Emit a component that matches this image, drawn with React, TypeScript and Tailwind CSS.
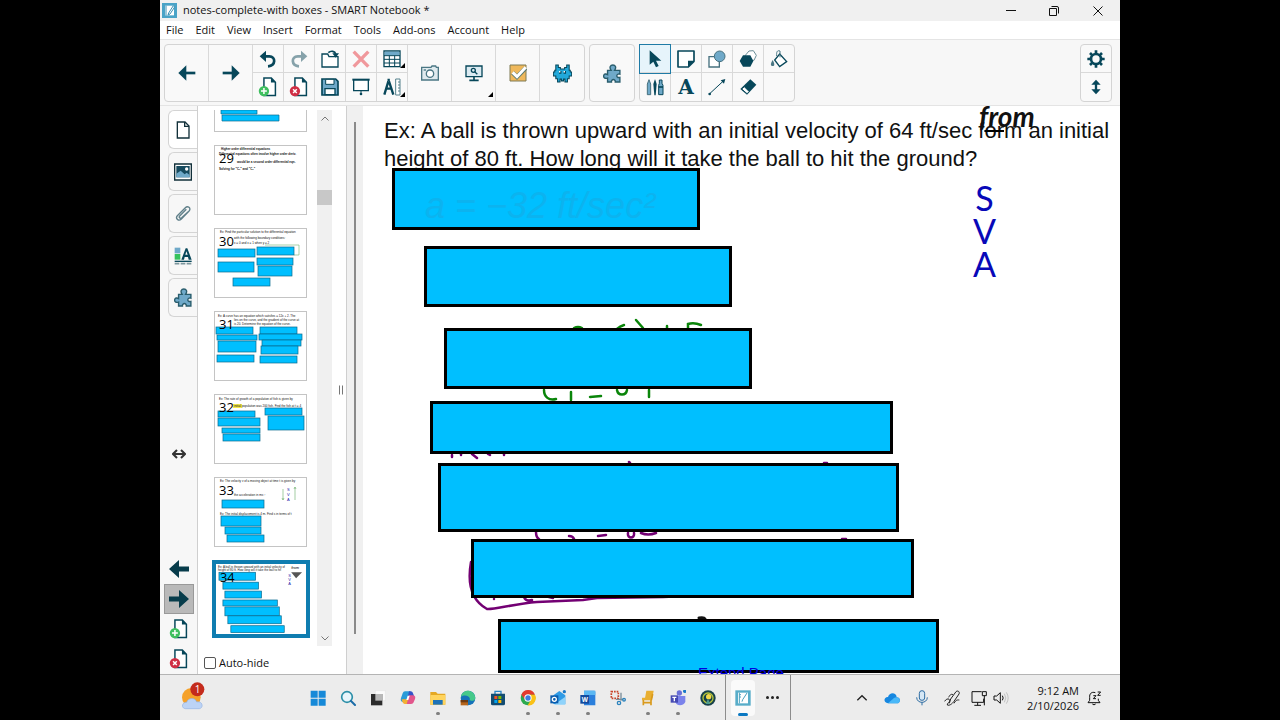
import React, { ReactNode } from 'react';
import clsx from 'clsx';

const INK = '#07475a';
const SKY = '#6fa9c9';

interface IconProps {
  children: ReactNode;
  size?: string;
}

// Every toolbar glyph is drawn on the same 54 unit grid
const Icon = ({ children, size = 'size-[18px]' }: IconProps) => (
  <svg viewBox="0 0 54 54" className={clsx(size, 'shrink-0')} fill="none" aria-hidden="true">
    {children}
  </svg>
);

const ArrowLeft = () => (
  <Icon>
    <path d="M1 27 25 4V50Z" fill={INK} />
    <path d="M20 27H52" stroke={INK} strokeWidth="8" />
  </Icon>
);

const ArrowRight = () => (
  <Icon>
    <path d="M53 27 29 4V50Z" fill={INK} />
    <path d="M2 27H34" stroke={INK} strokeWidth="8" />
  </Icon>
);

const Undo = () => (
  <Icon>
    <path d="M2 19 21 2V36Z" fill={INK} />
    <path d="M17 19H31C51 19 51 47 27 49" stroke={INK} strokeWidth="8" />
  </Icon>
);

const Redo = () => (
  <Icon>
    <path d="M52 19 33 2V36Z" fill="#86a2aa" />
    <path d="M37 19H23C3 19 3 47 27 49" stroke="#86a2aa" strokeWidth="8" />
  </Icon>
);

const OpenFile = () => (
  <Icon>
    <path d="M3 51V12H20L24 20H51V51Z" fill="#fff" stroke={INK} strokeWidth="4" />
    <path d="M22 8C30 1 42 3 44 12" stroke={INK} strokeWidth="5" />
    <path d="M34 10H54L44 23Z" fill={INK} />
  </Icon>
);

const Delete = () => (
  <Icon>
    <path d="M5 5 49 50M49 5 5 50" stroke="#f0989c" strokeWidth="10" />
  </Icon>
);

const Table = () => (
  <Icon>
    <path d="M3 3H51V50H3Z" fill="#fff" stroke={INK} strokeWidth="4" />
    <path d="M5 5H49V16H5Z" fill={SKY} />
    <path d="M3 17H51M3 28H51M3 39H51M19 17V50M35 17V50" stroke={INK} strokeWidth="3" />
  </Icon>
);

const Page = ({ kind }: { kind: 'add' | 'remove' }) => (
  <Icon size="size-[20px]">
    <path d="M16 3H36L47 14V50H16Z" fill="#fff" stroke={INK} strokeWidth="4" />
    <path d="M35 3V15H47Z" fill={INK} />
    <circle cx="16" cy="38" r="14" fill={kind === 'add' ? '#3fbf5f' : '#cf2f45'} />
    {kind === 'add' ? (
      <path d="M8 38H24M16 30V46" stroke="#fff" strokeWidth="4" />
    ) : (
      <path d="M11 33 21 43M21 33 11 43" stroke="#fff" strokeWidth="4" />
    )}
  </Icon>
);

const Save = () => (
  <Icon>
    <path d="M3 3H44L51 10V51H3Z" fill={SKY} stroke={INK} strokeWidth="5" />
    <path d="M14 4H39V19H14Z" fill="#fff" stroke={INK} strokeWidth="3" />
    <path d="M12 32H42V50H12Z" fill="#fff" stroke={INK} strokeWidth="4" />
  </Icon>
);

const Screen = () => (
  <Icon>
    <path d="M1 5H53" stroke={INK} strokeWidth="6" />
    <path d="M5 6H49V38H5Z" fill="#fff" stroke={INK} strokeWidth="4" />
    <path d="M27 38V46" stroke={INK} strokeWidth="3" />
    <circle cx="27" cy="48" r="4" fill={INK} />
  </Icon>
);

const Measure = () => (
  <Icon>
    <path d="M17 2V10M16 10 4 50M18 10 31 50M8 32H26" stroke={INK} strokeWidth="7" />
    <path d="M38 3H51V51H38Z" fill="#fff" stroke="#55808c" strokeWidth="3" />
    <path d="M45 12H51M45 21H51M45 30H51M45 39H51" stroke="#55808c" strokeWidth="3" />
  </Icon>
);

const Camera = () => (
  <Icon>
    <path d="M2 10H30L33 6H44L46 10H52V48H2Z" fill="#dfeaee" stroke="#4b7784" strokeWidth="4" />
    <circle cx="27" cy="29" r="11" fill="#fff" stroke="#4b7784" strokeWidth="4" />
    <path d="M8 18H15" stroke="#4b7784" strokeWidth="4" />
  </Icon>
);

const MonitorSearch = () => (
  <Icon>
    <path d="M3 6H51V38H3Z" fill="#dcebf2" stroke={INK} strokeWidth="4" />
    <circle cx="25" cy="19" r="6" stroke={INK} strokeWidth="4" />
    <path d="M29 23 37 31" stroke={INK} strokeWidth="4" />
    <path d="M27 38V48M13 49H41" stroke={INK} strokeWidth="5" />
  </Icon>
);

const Check = () => (
  <Icon>
    <path d="M3 3H51V51H3Z" fill="#efb85b" stroke="#7e7a55" strokeWidth="3" />
    <path d="M11 26 24 39 50 12" stroke="#5b7a70" strokeWidth="13" />
    <path d="M11 25 24 38 50 10" stroke="#fff" strokeWidth="9" />
  </Icon>
);

const Monster = () => (
  <Icon size="size-[19px]">
    <path
      d="M8 3H15V10H21V14H33V10H39V3H46V18H49V23H53V34H46V42H41V51H34V43H30V48H24V43H20V51H13V42H8V34H1V23H5V18H8Z"
      fill="#22a9da"
      stroke={INK}
      strokeWidth="3"
    />
    <path d="M17 20H24V28H17ZM30 20H37V28H30Z" fill={INK} />
    <path d="M17 20H21V24H17ZM30 20H34V24H30Z" fill="#fff" />
  </Icon>
);

const Puzzle = () => (
  <Icon size="size-[19px]">
    <path
      d="M13 18H23C17 9 21 3 28 3S39 9 33 18H48V29C38 25 35 41 48 38V51H35C36 42 23 42 24 51H13V40C5 43 1 38 2 33S8 27 13 30Z"
      fill={SKY}
      stroke="#2a5d6d"
      strokeWidth="4"
    />
  </Icon>
);

const Pointer = () => (
  <Icon>
    <path d="M11 1V44L22 35L30 52L38 48L30 32H46Z" fill={INK} />
  </Icon>
);

const Note = () => (
  <Icon>
    <path d="M3 3H51V34L34 51H3Z" fill="#fff" stroke={INK} strokeWidth="5" strokeLinejoin="round" />
    <path d="M51 32H33V51Z" fill={INK} />
  </Icon>
);

const Shapes = () => (
  <Icon>
    <path d="M3 20H34V51H3Z" fill="#fff" stroke="#47717f" strokeWidth="4" />
    <circle cx="35" cy="19" r="16" fill={SKY} stroke="#47717f" strokeWidth="3" />
  </Icon>
);

const Polygons = () => (
  <Icon>
    <path d="M30 3 43 2 52 16 45 31H26L19 16Z" fill="#fff" stroke="#6b8d97" strokeWidth="3" />
    <path d="M12 16H34L43 33 34 50H12L2 33Z" fill={INK} />
  </Icon>
);

const Fill = () => (
  <Icon>
    <path d="M29 12 50 35 29 50 14 30Z" fill="#fff" stroke={INK} strokeWidth="4" />
    <path d="M30 22V3C22 0 19 5 20 18" stroke="#4b7784" strokeWidth="3" />
    <path d="M8 30C0 42 2 48 8 48S15 42 8 30Z" fill="#4b7784" />
  </Icon>
);

const Pens = () => (
  <Icon>
    <path d="M4 18 9 5 14 18V50H4Z" fill={SKY} stroke="#47717f" strokeWidth="3" />
    <path d="M27 3 32 18 29 52H25L22 18Z" fill={INK} />
    <path d="M40 16V6H48V16L51 22V50H38V22Z" fill={SKY} stroke={INK} strokeWidth="3" />
    <path d="M38 27H51" stroke={INK} strokeWidth="5" />
  </Icon>
);

const LineTool = () => (
  <Icon>
    <path d="M4 48 46 9" stroke={INK} strokeWidth="3" />
    <path d="M52 3 48 17 38 7Z" fill={INK} />
    <circle cx="5" cy="48" r="4" fill={INK} />
  </Icon>
);

const Eraser = () => (
  <Icon>
    <path d="M34 4 52 20 24 50 4 33Z" fill={INK} />
    <path d="M16 26 31 41 24 47 8 33Z" fill="#fff" stroke={INK} strokeWidth="3" />
  </Icon>
);

const Gear = () => (
  <Icon>
    <circle cx="27" cy="27" r="15" stroke={INK} strokeWidth="8" />
    <path
      d="M27 1V11M27 43V53M1 27H11M43 27H53M9 9 16 16M38 38 45 45M45 9 38 16M9 45 16 38"
      stroke={INK}
      strokeWidth="8"
    />
  </Icon>
);

const UpDown = () => (
  <Icon>
    <path d="M27 5 41 20H13ZM27 49 13 34H41Z" fill={INK} />
    <path d="M27 14V40" stroke={INK} strokeWidth="7" />
  </Icon>
);

interface CellProps {
  label: string;
  children?: ReactNode;
  tall?: boolean;
  menu?: boolean;
  active?: boolean;
}

const Cell = ({ label, children, tall, menu, active }: CellProps) => (
  <button
    aria-label={label}
    className={clsx(
      'relative flex items-center justify-center',
      tall ? 'h-[56px] w-11' : 'h-[28px] w-[30px]',
      active && 'bg-[#e6f4fb] outline outline-[#1f7ba6]',
    )}
  >
    {children}
    {menu && (
      <svg viewBox="0 0 5 5" className="absolute right-0.5 bottom-1 size-[5px]" aria-hidden="true">
        <path d="M5 0V5H0Z" fill="#000" />
      </svg>
    )}
  </button>
);

const group = 'flex h-[58px] divide-x divide-[#d9d9d9] rounded-sm border border-[#d4d4d4] bg-[#f9f9f9]';
const pair = 'flex flex-col divide-y divide-[#d9d9d9]';

const Toolbar = () => (
  <div className="flex h-[67px] items-start gap-1 border-y border-[#e4e4e4] bg-[#f7f7f7] px-1 pt-1">
    <div className={group}>
      <Cell label="Previous page" tall><ArrowLeft /></Cell>
      <Cell label="Next page" tall><ArrowRight /></Cell>
      <div className={pair}>
        <Cell label="Undo"><Undo /></Cell>
        <Cell label="Add page"><Page kind="add" /></Cell>
      </div>
      <div className={pair}>
        <Cell label="Redo"><Redo /></Cell>
        <Cell label="Delete page"><Page kind="remove" /></Cell>
      </div>
      <div className={pair}>
        <Cell label="Open file"><OpenFile /></Cell>
        <Cell label="Save"><Save /></Cell>
      </div>
      <div className={pair}>
        <Cell label="Delete"><Delete /></Cell>
        <Cell label="Screen shade"><Screen /></Cell>
      </div>
      <div className={pair}>
        <Cell label="Table" menu><Table /></Cell>
        <Cell label="Measurement tools" menu><Measure /></Cell>
      </div>
      <Cell label="Screen capture" tall><Camera /></Cell>
      <Cell label="View screens" tall menu><MonitorSearch /></Cell>
      <Cell label="Response" tall><Check /></Cell>
      <Cell label="Game" tall><Monster /></Cell>
    </div>
    <div className={group}>
      <Cell label="Add-ons" tall><Puzzle /></Cell>
    </div>
    <div className={group}>
      <div className={pair}>
        <Cell label="Select" active><Pointer /></Cell>
        <Cell label="Pens"><Pens /></Cell>
      </div>
      <div className={pair}>
        <Cell label="Sticky note"><Note /></Cell>
        <Cell label="Text">
          <span className="font-['DejaVu_Serif',serif] text-xl leading-5 font-bold text-[#07475a]">A</span>
        </Cell>
      </div>
      <div className={pair}>
        <Cell label="Shapes"><Shapes /></Cell>
        <Cell label="Lines"><LineTool /></Cell>
      </div>
      <div className={pair}>
        <Cell label="Regular polygons"><Polygons /></Cell>
        <Cell label="Eraser"><Eraser /></Cell>
      </div>
      <div className={pair}>
        <Cell label="Fill"><Fill /></Cell>
        <Cell label="Empty" />
      </div>
    </div>
    <div className={clsx(group, 'mr-1 ml-auto')}>
      <div className={pair}>
        <Cell label="Settings"><Gear /></Cell>
        <Cell label="Move toolbar"><UpDown /></Cell>
      </div>
    </div>
  </div>
);

const TitleBar = () => (
  <header className="flex h-[21px] items-center bg-[#f0f0f0] pl-0.5">
    <svg viewBox="0 0 45 45" className="size-[15px]" aria-hidden="true">
      <path d="M0 0H45V45H0Z" fill="#4aa3c7" />
      <path d="M9 8H36V37H9Z" fill="#fff" />
      <path d="M34 8 20 30 18 36 24 33 38 12ZM12 8V37" stroke="#3b8fb3" strokeWidth="3" fill="#fff" />
    </svg>
    <h1 className="ml-[6px] text-[11px]">notes-complete-with boxes - SMART Notebook *</h1>
    <div className="ml-auto flex">
      <button aria-label="Minimize" className="flex h-5 w-[43px] items-center justify-center">
        <svg viewBox="0 0 10 10" className="size-[10px]"><path d="M0 4.5H10" stroke="#111" /></svg>
      </button>
      <button aria-label="Restore" className="flex h-5 w-[43px] items-center justify-center">
        <svg viewBox="0 0 10 10" className="size-[10px]" fill="none" stroke="#111">
          <path d="M.5 2.5H7.5V9.5H.5ZM2.5 .5H8Q9.5 .5 9.5 2V7.5" />
        </svg>
      </button>
      <button aria-label="Close" className="flex h-5 w-[45px] items-center justify-center">
        <svg viewBox="0 0 10 10" className="size-[10px]"><path d="M.5 .5 9.5 9.5M9.5 .5 .5 9.5" stroke="#111" /></svg>
      </button>
    </div>
  </header>
);

const menus = ['File', 'Edit', 'View', 'Insert', 'Format', 'Tools', 'Add-ons', 'Account', 'Help'];

const MenuBar = () => (
  <nav className="flex h-[18px] items-center gap-3 bg-white pl-1.5 text-[11px]">
    {menus.map((m) => (
      <button key={m}>{m}</button>
    ))}
  </nav>
);

const railTab = 'flex h-[39px] items-center justify-center rounded-l-md border border-r-0 border-[#d4d4d4]';
const railButton = 'flex h-[30px] w-[30px] items-center justify-center';

const Rail = () => (
  <div className="flex w-[37px] shrink-0 flex-col bg-[#f7f7f7] pt-1">
    <div className="flex flex-col gap-[3px] pl-2">
      <button aria-label="Page sorter" className={clsx(railTab, 'bg-white')}>
        <Icon>
          <path d="M10 3H33L45 15V51H10Z" fill="#fff" stroke="#12303a" strokeWidth="4" />
          <path d="M32 3V16H45" stroke="#12303a" strokeWidth="4" />
        </Icon>
      </button>
      <button aria-label="Gallery" className={railTab}>
        <Icon>
          <path d="M2 3H52V51H2Z" fill="#fff" stroke="#12303a" strokeWidth="4" />
          <path d="M7 9H47V43H7Z" fill="#164a5e" />
          <path d="M7 32 20 23 32 34 38 29 47 36V43H7Z" fill={SKY} />
          <circle cx="38" cy="18" r="5" fill="#fff" />
        </Icon>
      </button>
      <button aria-label="Attachments" className={railTab}>
        <Icon>
          <path
            d="M46 17 22 42C14 50 3 41 10 32L34 8C41 1 52 9 46 17L23 38C18 42 13 37 17 33L37 13"
            stroke="#5f7f89"
            strokeWidth="4"
          />
        </Icon>
      </button>
      <button aria-label="Properties" className={railTab}>
        <Icon>
          <path d="M2 2H19V19H2Z" fill={SKY} />
          <path d="M2 21H19V38H2Z" fill="#35c25c" />
          <path d="M22 38 35 4H40L53 38H44L42 30H32L30 38ZM34 23H41L37 13Z" fill={INK} fillRule="evenodd" />
          <path d="M2 43H53" stroke={INK} strokeWidth="4" />
          <path d="M2 50H53" stroke="#7c969d" strokeWidth="5" strokeDasharray="14 4" />
        </Icon>
      </button>
      <button aria-label="Extensions" className={railTab}><Puzzle /></button>
    </div>
    <button aria-label="Move panel" className="mt-auto flex h-7 items-center justify-center">
      <svg viewBox="0 0 14 10" className="h-[10px] w-[14px]" fill="none" stroke="#333" strokeWidth="2" aria-hidden="true">
        <path d="M5 1 1 5 5 9M9 1 13 5 9 9M1 5H13" />
      </svg>
    </button>
    <div className="mt-[86px] flex flex-col items-center">
      <button aria-label="Previous" className={railButton}>
        <svg viewBox="0 0 20 18" className="h-[18px] w-5"><path d="M0 9 10 0V6.5H20V11.5H10V18Z" fill="#073c4b" /></svg>
      </button>
      <button aria-label="Next" className={clsx(railButton, 'border border-[#999] bg-[#b9b9b9]')}>
        <svg viewBox="0 0 20 18" className="h-[18px] w-5"><path d="M20 9 10 0V6.5H0V11.5H10V18Z" fill="#073c4b" /></svg>
      </button>
      <button aria-label="Insert page" className={railButton}><Page kind="add" /></button>
      <button aria-label="Remove page" className={railButton}><Page kind="remove" /></button>
    </div>
  </div>
);

interface Thumb {
  no?: number;
  lines: [number, number, string][];
  boxes: [number, number, number, number][];
  bold?: boolean;
  extra?: ReactNode;
}

const thumbs: Thumb[] = [
  {
    no: 29,
    bold: true,
    lines: [
      [6, 4, 'Higher order differential equations'],
      [4, 9, 'Differential equations often involve higher order deriv.'],
      [22, 17, 'would be a second order differential eqn.'],
      [4, 24, 'Solving for "C₁" and "C₂"'],
    ],
    boxes: [],
  },
  {
    no: 30,
    lines: [
      [5, 4, 'Ex: Find the particular solution to the differential equation'],
      [19, 10, 'with the following boundary conditions:'],
      [19, 15, 'x = 0 and x = 1 when y = 2'],
    ],
    boxes: [[3, 20, 37, 8], [42, 18, 37, 8], [42, 29, 36, 7], [3, 33, 36, 10], [43, 37, 34, 10], [18, 49, 37, 8]],
    extra: <path d="M50 16H84V26H79" fill="none" stroke="#6fb36f" strokeWidth=".6" />,
  },
  {
    no: 31,
    lines: [
      [3, 5, 'Ex: A curve has an equation which satisfies = 12x + 2. The'],
      [19, 9, 'lies on the curve, and the gradient of the curve at'],
      [19, 13, 'is 20. Determine the equation of the curve.'],
    ],
    boxes: [
      [1, 15, 37, 7], [2, 23, 40, 5], [3, 29, 38, 11], [2, 43, 37, 7],
      [45, 15, 37, 7], [44, 22, 43, 6], [47, 28, 39, 6], [46, 34, 37, 8], [45, 44, 37, 7],
    ],
  },
  {
    no: 32,
    lines: [
      [4, 5, 'Ex: The rate of growth of a population of fish is given by'],
      [19, 12, 'initial population was 200 fish. Find the fish at t = 4'],
    ],
    boxes: [[3, 16, 37, 6], [3, 23, 42, 8], [7, 33, 38, 5], [8, 39, 37, 7], [50, 13, 37, 7], [53, 21, 36, 14]],
    extra: <path d="M18 9H27V13H18Z" fill="#f4e94b" />,
  },
  {
    no: 33,
    lines: [
      [5, 4, 'Ex: The velocity v of a moving object at time t is given by'],
      [19, 18, 'the acceleration in ms⁻²'],
      [5, 37, 'Ex: The initial displacement is 4 m. Find s in terms of t'],
    ],
    boxes: [[7, 22, 42, 8], [6, 38, 40, 10], [10, 49, 36, 7], [12, 57, 37, 7]],
    extra: (
      <>
        <path d="M68 11V22M80 22V9M79 11 80 9 81 11M67 20 68 22 69 20" fill="none" stroke="#7db87d" strokeWidth=".7" />
        <text x="72" y="13" fontSize="4" fill="#2222aa">S</text>
        <text x="72" y="18" fontSize="4" fill="#2222aa">V</text>
        <text x="72" y="23" fontSize="4" fill="#2222aa">A</text>
      </>
    ),
  },
];

const current: Thumb = {
  no: 34,
  lines: [
    [2, 3, 'Ex: A ball is thrown upward with an initial velocity of'],
    [2, 6, 'height of 80 ft. How long will it take the ball to hit'],
  ],
  boxes: [[3, 7, 37, 8], [7, 17, 36, 7], [9, 26, 37, 7], [7, 35, 55, 6], [9, 42, 55, 9], [12, 51, 54, 8], [15, 61, 54, 7]],
  extra: (
    <>
      <path d="M76 7H87L81 13Z" fill="#555" />
      <text x="76" y="4" fontSize="4" fontStyle="italic">from</text>
      <text x="73" y="12" fontSize="4" fill="#2222aa">S</text>
      <text x="73" y="16" fontSize="4" fill="#2222aa">V</text>
      <text x="73" y="20" fontSize="4" fill="#2222aa">A</text>
    </>
  ),
};

const ThumbArt = ({ thumb }: { thumb: Thumb }) => (
  <svg viewBox="0 0 91 68" className="block h-full w-full font-['Liberation_Sans',sans-serif]">
    {thumb.extra}
    {thumb.lines.map(([x, y, text]) => (
      <text key={text} x={x} y={y} fontSize="3" fontWeight={thumb.bold ? 'bold' : 'normal'} fill="#111">{text}</text>
    ))}
    {thumb.boxes.map(([x, y, w, h]) => (
      <rect key={`${x}-${y}`} x={x} y={y} width={w} height={h} fill="#00bfff" stroke="#0b6a8e" strokeWidth=".7" />
    ))}
    <text x="4" y="17" fontSize="13" className="font-['Open_Sans',sans-serif]">{thumb.no}</text>
  </svg>
);

const ClippedThumb = () => (
  <svg viewBox="0 0 91 21" className="block h-full w-full">
    <path d="M6 0H42V4H6ZM7 5H64V11H7Z" fill="#00bfff" stroke="#0b6a8e" strokeWidth=".7" />
  </svg>
);

const Sorter = () => (
  <div className="flex w-[150px] shrink-0 flex-col border-x border-[#cfcfcf] bg-white pt-1">
    <div className="flex">
      <div className="flex flex-1 flex-col items-center gap-[13px] pb-2 pl-3">
        <button aria-label="Page 28" className="h-[22px] w-[93px] border border-t-0 border-[#c4c4c4]">
          <ClippedThumb />
        </button>
        {thumbs.map((t) => (
          <button key={t.no} aria-label={`Page ${t.no}`} className="h-[70px] w-[93px] border border-[#c4c4c4]">
            <ThumbArt thumb={t} />
          </button>
        ))}
        <button aria-label="Page 34" aria-current="page" className="h-[78px] w-[98px] border-4 border-[#0f7db0]">
          <ThumbArt thumb={current} />
        </button>
      </div>
      <div className="mr-3.5 ml-1.5 flex w-[15px] flex-col items-center bg-[#f0f0f0]">
        <button aria-label="Scroll up" className="flex h-4 items-center">
          <svg viewBox="0 0 8 5" className="h-[5px] w-2"><path d="M.5 4.5 4 1 7.5 4.5" fill="none" stroke="#777" /></svg>
        </button>
        <div className="mt-16 h-[15px] w-full bg-[#c8c8c8]" />
        <button aria-label="Scroll down" className="mt-auto flex h-4 items-center">
          <svg viewBox="0 0 8 5" className="h-[5px] w-2"><path d="M.5 .5 4 4 7.5 .5" fill="none" stroke="#777" /></svg>
        </button>
      </div>
    </div>
    <label className="flex flex-1 items-center gap-[3px] pt-1.5 pl-1.5 text-[11px] leading-4">
      <input type="checkbox" className="size-3 appearance-none rounded-xs border border-[#555] bg-white" />
      Auto-hide
    </label>
  </div>
);

// Cover boxes keep the positions they were dragged to on the page
const covers = [
  'left-[29px] top-[62px] w-[308px] h-[62px]',
  'left-[61px] top-[140px] w-[308px] h-[61px]',
  'left-[81px] top-[222px] w-[308px] h-[61px]',
  'left-[67px] top-[295px] w-[463px] h-[53px]',
  'left-[75px] top-[357px] w-[461px] h-[69px]',
  'left-[108px] top-[433px] w-[443px] h-[59px]',
  'left-[135px] top-[513px] w-[441px] h-[54px]',
];

const Slide = () => (
  <main className="relative flex-1 overflow-hidden bg-white pt-[11px] pl-[21px] font-['Liberation_Sans',Arial,sans-serif]">
    <p className="text-[22px] leading-7 whitespace-nowrap">
      Ex: A ball is thrown upward with an initial velocity of 64 ft/sec f<s className="decoration-black decoration-2">or</s>m an initial
      <br />
      height of 80 ft. How long will it take the ball to hit the ground?
    </p>
    <svg viewBox="0 0 757 568" className="absolute top-0 left-0 h-[568px] w-[757px]" fill="none" strokeLinecap="round" strokeWidth="3" aria-hidden="true">
      <g stroke="#0a850a" strokeWidth="2.5">
        <path d="M211 222Q215 220 219 222M254 223Q257 220 261 219M273 214 280 222M304 220V223M325 223V218Q331 216 338 219" />
        <path d="M181 284C181 291 186 295 193 293M208 286V294M227 291 238 290M254 284C255 290 263 290 264 284M286 284V291" />
      </g>
      <g stroke="#730073" strokeWidth="2.5">
        <path d="M89 349V351M98 348V349M109 348 114 352M125 348 127 349M141 348V349M266 356 267 357M461 357 464 357" />
        <path d="M173 426C173 430 174 432 176 433M206 430Q210 430 211 433M235 430 243 429M265 427C264 433 272 433 271 427M278 427Q285 430 293 427M479 433H483" />
        <path d="M108 456C105 473 106 493 124 503C130 504 150 498 174 496L220 494L234 492L300 491L324 490M131 493 131 493M161 491Q163 496 169 494M186 491 190 492" />
      </g>
      <path d="M336 512Q341 511 342 513" stroke="#111" />
    </svg>
    {covers.map((c) => (
      <div key={c} className={clsx('absolute border-[3px] border-black bg-[#00bfff]', c)} />
    ))}
    <span className="absolute top-[82px] left-[62px] text-4xl leading-9 whitespace-nowrap text-[#0cb3ef] italic">
      a = −32 ft/sec²
    </span>
    <span className="absolute top-0 left-[616px] font-['Lato',sans-serif] text-[28px] leading-5 font-bold italic">from</span>
    <div className="absolute top-[75px] left-[610px] flex flex-col items-center font-['Lato',sans-serif] text-[34px] leading-[33px] text-[#0808b8]">
      <span>S</span>
      <span>V</span>
      <span>A</span>
    </div>
    <a href="#extend" className="absolute top-[557px] left-[335px] text-[15px] leading-5 text-[#0000e0]">Extend Page</a>
  </main>
);

interface TaskProps {
  label: string;
  children: ReactNode;
  running?: boolean;
}

const Task = ({ label, children, running }: TaskProps) => (
  <button aria-label={label} className="relative flex h-[45px] w-[30px] items-center justify-center">
    <svg viewBox="0 0 48 48" className="size-4" fill="none">{children}</svg>
    {running && <span className="absolute bottom-[5px] h-[3px] w-1 rounded-full bg-[#808080]" />}
  </button>
);

const Taskbar = () => (
  <footer className="flex h-[46px] items-center border-t border-[#b4b4b4] bg-[#ececec]">
    <button aria-label="Weather" className="ml-4 h-8 w-8">
      <svg viewBox="0 0 96 96" className="size-8">
        <circle cx="46" cy="46" r="28" fill="#f5a12a" />
        <path d="M28 80C14 78 18 60 32 61C36 46 58 46 62 60C80 56 84 78 70 80Z" fill="#bcd3f5" stroke="#93b2e2" strokeWidth="2" />
        <circle cx="64" cy="22" r="21" fill="#c42b1c" />
        <text x="56" y="32" fontSize="30" fill="#fff" className="font-['Open_Sans',sans-serif]">1</text>
      </svg>
    </button>
    <div className="ml-[95px] flex items-center">
      <Task label="Start">
        <path d="M2 2H23V23H2ZM26 2H47V23H26ZM2 26H23V47H2ZM26 26H47V47H26Z" fill="#1689d8" />
      </Task>
      <Task label="Search">
        <circle cx="21" cy="21" r="16" fill="#e8f5fb" stroke="#2c8fa8" strokeWidth="5" />
        <path d="M33 33 45 45" stroke="#1b6ca8" strokeWidth="6" strokeLinecap="round" />
      </Task>
      <Task label="Task view">
        <path d="M16 2H46V32H16Z" fill="#fafafa" stroke="#d5d5d5" />
        <path d="M3 12H37V46H3Z" fill="#2b2b2b" />
        <path d="M16 12H37V32H16Z" fill="#b8b8b8" />
      </Task>
      <Task label="Copilot">
        <path d="M15 4H31L22 36H8Q0 34 3 24L8 10Q10 4 15 4Z" fill="#2a9bd8" />
        <path d="M27 4H33Q38 5 40 12L42 18H24Z" fill="#3553c9" />
        <path d="M27 16H40Q48 18 45 27L40 38Q38 42 32 42H18Z" fill="#e2568c" />
        <path d="M5 28H24L20 42H14Q7 40 5 28Z" fill="#f2b134" />
        <path d="M23 17H29L25 30H19Z" fill="#fff" />
      </Task>
      <Task label="File Explorer" running>
        <path d="M1 6H18L23 11H46V44H1Z" fill="#e5a823" />
        <path d="M1 15H46V44H1Z" fill="#ffd45e" />
        <path d="M9 44V30H38V44Z" fill="#1d72b8" />
      </Task>
      <Task label="Edge">
        <circle cx="24" cy="24" r="22" fill="#1572b9" />
        <path d="M3 20C8 -4 42 -4 46 23C46 34 32 34 29 29C33 18 14 12 3 20Z" fill="#46c98a" />
        <path d="M2 30H24V46H2Z" fill="#b5651d" />
        <path d="M2 30H24V37H2Z" fill="#6e3b12" />
      </Task>
      <Task label="Store">
        <path d="M15 12V4H33V12" stroke="#2b84c4" strokeWidth="4" />
        <path d="M3 11H45V41Q45 46 40 46H8Q3 46 3 41Z" fill="#134c72" />
        <path d="M13 18H22V27H13Z" fill="#f25022" />
        <path d="M25 18H34V27H25Z" fill="#7fba00" />
        <path d="M13 30H22V39H13Z" fill="#00a4ef" />
        <path d="M25 30H34V39H25Z" fill="#ffb900" />
      </Task>
      <Task label="Chrome" running>
        <circle cx="24" cy="24" r="22" fill="#2da94f" />
        <path d="M4 14A22 22 0 0 1 45 14H24L14 28Z" fill="#e33b2e" />
        <path d="M45 14A22 22 0 0 1 23 46L34 28 28 14Z" fill="#fbc116" />
        <circle cx="24" cy="24" r="11" fill="#fff" />
        <circle cx="24" cy="24" r="8" fill="#3f7de0" />
      </Task>
      <Task label="Outlook" running>
        <path d="M10 16 28 3 46 16V42H10Z" fill="#2f9be6" />
        <path d="M12 44 46 20V44Z" fill="#8fd3fb" />
        <path d="M1 16H25V40H1Z" fill="#0b5cad" />
        <circle cx="13" cy="28" r="6" stroke="#fff" strokeWidth="4" />
        <circle cx="43" cy="5" r="5" fill="#1979c9" />
      </Task>
      <Task label="Word" running>
        <path d="M12 2H42Q46 2 46 6V46H12Z" fill="#2b7fdc" />
        <path d="M12 2H46V15H12Z" fill="#5bb7f2" />
        <path d="M1 15H27V41H1Z" fill="#134a9e" />
        <text x="5" y="35" fontSize="19" fontWeight="bold" fill="#fff">W</text>
      </Task>
      <Task label="Snipping Tool">
        <path d="M4 5H25V25H4Z" stroke="#c8442a" strokeWidth="5" strokeDasharray="5 3" />
        <path d="M33 8V32M18 28H40" stroke="#7a8d99" strokeWidth="4" />
        <circle cx="27" cy="39" r="5" stroke="#2c83bd" strokeWidth="4" />
        <circle cx="42" cy="29" r="4" stroke="#2c83bd" strokeWidth="4" />
      </Task>
      <Task label="Classroom" running>
        <path d="M19 2H41L37 25H15ZM6 23H36V31H6Z" fill="#e9af31" />
        <path d="M10 30V46M33 30V46M38 12 34 30M8 38H33" stroke="#d99a1c" strokeWidth="5" />
      </Task>
      <Task label="Teams" running>
        <circle cx="28" cy="9" r="8" fill="#6a70d8" />
        <path d="M16 18H46V36Q40 46 30 46T16 36Z" fill="#7b83eb" />
        <path d="M2 16H24V38H2Z" fill="#4549b3" />
        <path d="M7 22H19M13 22V34" stroke="#fff" strokeWidth="4" />
        <circle cx="44" cy="4" r="5" fill="#1979c9" />
      </Task>
      <Task label="Media">
        <circle cx="24" cy="24" r="23" fill="#17414a" />
        <circle cx="24" cy="24" r="15" stroke="#b6c43a" strokeWidth="4" />
        <circle cx="26" cy="20" r="8" fill="#f3d84a" />
        <path d="M24 26 17 42H31Z" fill="#4d9a8d" />
      </Task>
    </div>
    <div className="ml-0.5 flex h-[45px] items-center gap-1 border-x border-[#8c8c8c] px-[5px]">
      <button aria-label="SMART Notebook" className="relative flex h-9 w-6 items-center justify-center rounded-sm bg-[#fafafa]">
        <svg viewBox="0 0 48 48" className="size-4">
          <path d="M1 1H47V47H1Z" fill="#58adc9" />
          <path d="M9 8H39V40H9Z" fill="#fff" />
          <path d="M36 9 23 29 21 35M13 8V40M13 14H18M13 21H18" stroke="#4aa0bd" strokeWidth="3" fill="none" />
        </svg>
        <span className="absolute bottom-0 h-[3px] w-[10px] rounded-full bg-[#0a78c2]" />
      </button>
      <button aria-label="More" className="flex h-9 w-[26px] items-center justify-center gap-0.5">
        <span className="size-[3px] rounded-full bg-[#222]" />
        <span className="size-[3px] rounded-full bg-[#222]" />
        <span className="size-[3px] rounded-full bg-[#222]" />
      </button>
    </div>
    <div className="ml-auto flex items-center">
      <Task label="Hidden icons">
        <path d="M10 31 24 17 38 31" stroke="#222" strokeWidth="4" />
      </Task>
      <Task label="OneDrive">
        <path d="M12 40C-4 38 0 20 12 21C17 4 38 8 38 22C52 22 50 40 38 40Z" fill="#1687e0" />
        <path d="M12 40 30 24Q36 20 42 23C51 28 48 40 38 40Z" fill="#49b8f8" />
      </Task>
      <Task label="Microphone">
        <path d="M24 2Q32 2 32 10V24Q32 31 24 31T16 24V10Q16 2 24 2Z" fill="#d5e7f5" stroke="#2d6ca3" strokeWidth="3" />
        <path d="M8 22C8 42 40 42 40 22M24 37V46" stroke="#2d6ca3" strokeWidth="3" />
      </Task>
      <Task label="Pen">
        <path
          d="M2 34C6 26 16 24 17 31C18 38 8 40 10 45C16 48 24 42 30 34L45 12C48 6 42 0 36 5L20 27L16 40M27 14C20 10 16 18 14 22M30 40C36 28 42 30 46 30"
          stroke="#222"
          strokeWidth="3"
        />
      </Task>
      <button aria-label="Network and sound" className="flex h-[45px] w-[46px] items-center justify-center gap-1.5">
        <svg viewBox="0 0 48 48" className="size-4" fill="none" stroke="#111" strokeWidth="3">
          <path d="M32 5H3V37H38V26M20 37V46M10 46H30M34 5H46V17H34ZM40 17V46" />
        </svg>
        <svg viewBox="0 0 48 48" className="size-4" fill="none" stroke="#111" strokeWidth="3">
          <path d="M3 18H11L22 8V40L11 30H3ZM28 17Q33 24 28 31" />
          <path d="M34 11Q43 24 34 37M40 7Q51 24 40 41" stroke="#c3c3c3" />
        </svg>
      </button>
      <button className="w-[66px] text-right text-[11px] leading-[15px] whitespace-nowrap">
        9:12 AM
        <br />
        2/10/2026
      </button>
      <Task label="Notifications">
        <path d="M28 8C16 4 10 12 11 22V31L6 38H42L37 31V26M19 42Q24 47 29 42" stroke="#111" strokeWidth="3" />
        <path d="M22 17H30L22 26H30M35 6H44L35 16H44" stroke="#111" strokeWidth="3" />
      </Task>
      <div className="w-[11px]" />
    </div>
  </footer>
);

export default function App() {
  return (
    <div className="min-h-screen bg-black px-40">
      <div className="flex min-h-screen flex-col overflow-hidden bg-white font-['Open_Sans','Noto_Sans',sans-serif] text-[#111]">
        <TitleBar />
        <MenuBar />
        <Toolbar />
        <div className="flex flex-1">
          <Rail />
          <Sorter />
          <div className="relative flex w-4 shrink-0 justify-center bg-[#f0f0f0] py-4">
            <div className="mb-6 w-0.5 bg-[#8a8a8a]" />
            {/* drag grip, sits over the edge of the page sorter */}
            <div className="absolute top-1/2 right-full mr-1 flex -translate-y-1/2 gap-0.5">
              <div className="h-[9px] w-px bg-[#777]" />
              <div className="h-[9px] w-px bg-[#777]" />
            </div>
          </div>
          <Slide />
        </div>
        <Taskbar />
      </div>
    </div>
  );
}
